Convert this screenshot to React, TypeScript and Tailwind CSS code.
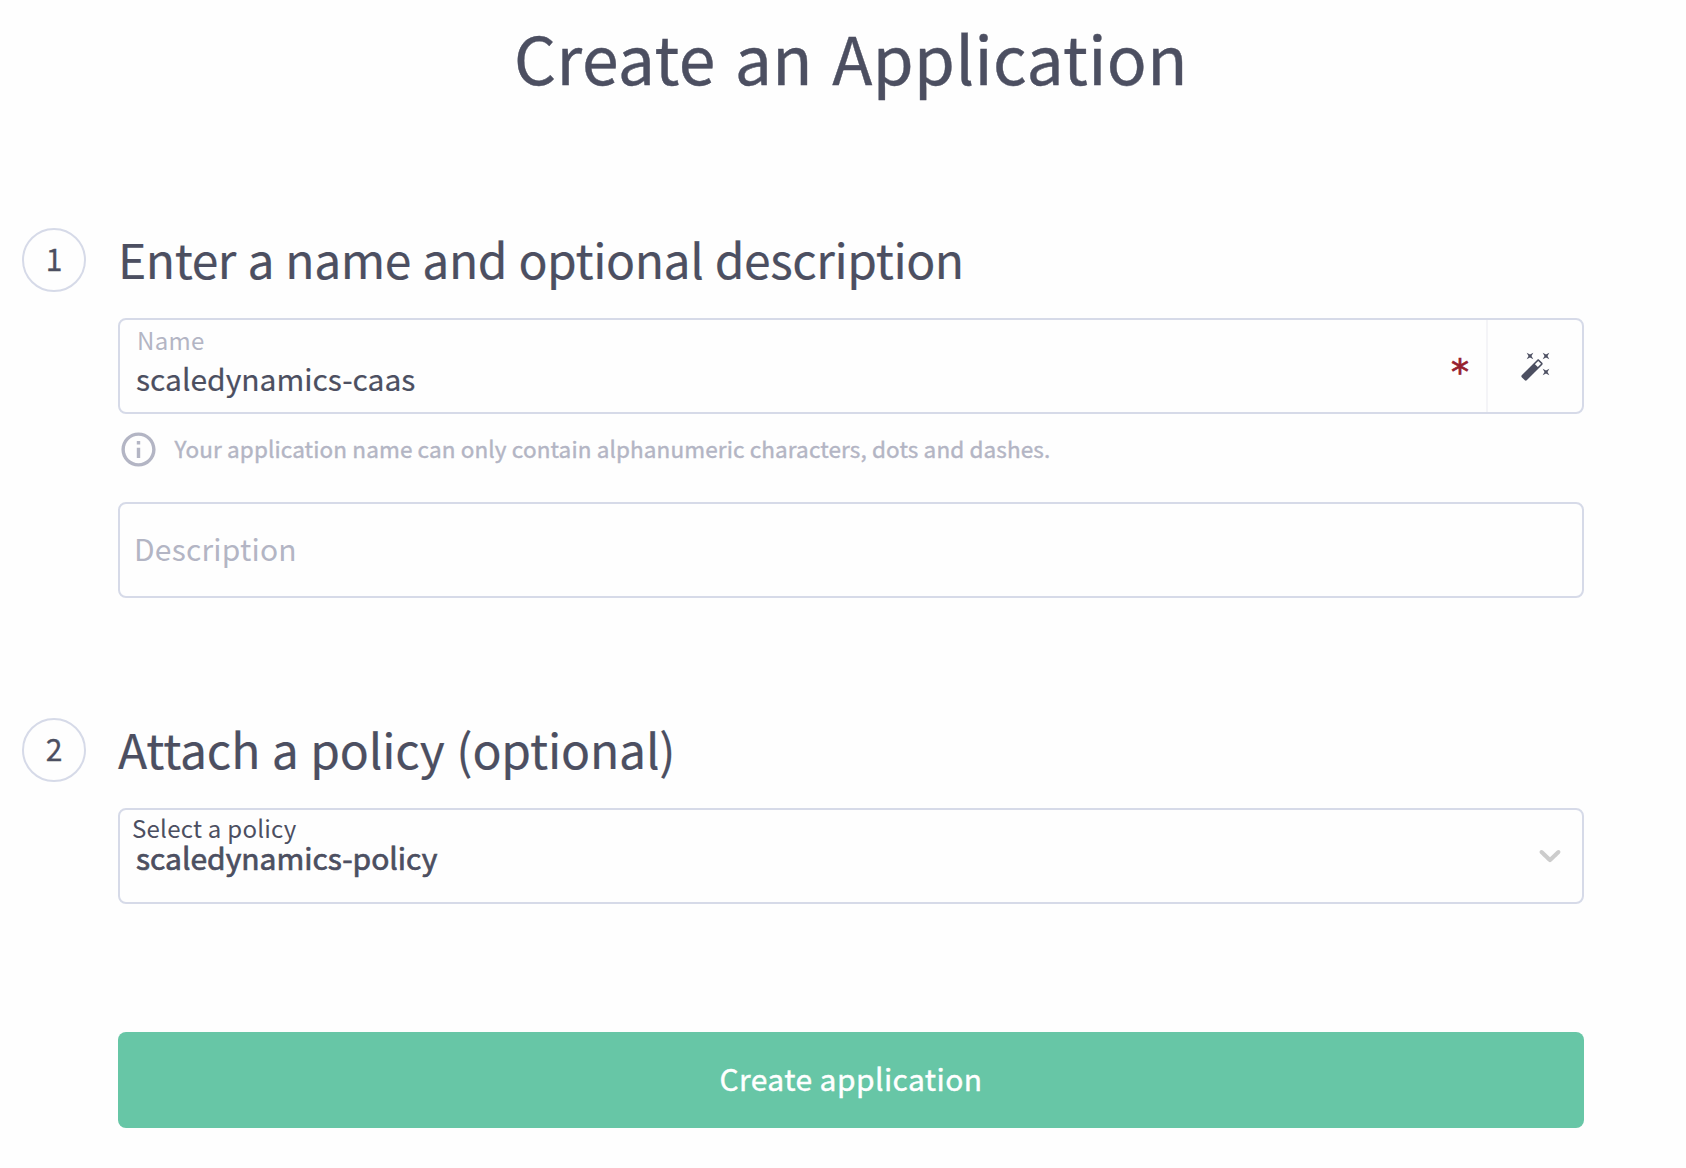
import React from "react";
import { MdInfoOutline } from "react-icons/md";

function Step({ number, title, titleClass }: { number: string; title: string; titleClass: string }) {
  return (
    <div className="flex h-16 items-center">
      <div className="flex size-16 shrink-0 items-center justify-center rounded-full border-2 border-[#d6dae8] pb-1 text-[30px] leading-10 [-webkit-text-stroke:0.3px]">
        {number}
      </div>
      <h2 className={`ml-8 pb-1 text-[48px] leading-[60px] whitespace-nowrap [-webkit-text-stroke:0.2px] ${titleClass}`}>{title}</h2>
    </div>
  );
}

function WandIcon() {
  return (
    <svg viewBox="0 0 24 24" className="ml-0.5 size-8" fill="currentColor">
      <path d="M7.5 5.6 5 7l1.4-2.5L5 2l2.5 1.4L10 2 8.6 4.5 10 7 7.5 5.6m12 9.8L22 14l-1.4 2.5L22 19l-2.5-1.4L17 19l1.4-2.5L17 14l2.5 1.4M22 2l-1.4 2.5L22 7l-2.5-1.4L17 7l1.4-2.5L17 2l2.5 1.4L22 2m-8.66 10.78 2.44-2.44-2.12-2.12-2.44 2.44 2.12 2.12m1.03-5.49 2.34 2.34c.39.37.39 1.02 0 1.41L5.04 22.71c-.39.39-1.04.39-1.41 0l-2.34-2.34c-.39-.37-.39-1.02 0-1.41L12.96 7.29c.39-.39 1.04-.39 1.41 0z" />
    </svg>
  );
}

export default function App() {
  return (
    <main className="h-[1168px] w-[1686px] overflow-hidden bg-[#fefefe] pr-[102px] pl-[22px] font-['Noto_Sans_CJK_SC',sans-serif] text-[#4c4f61]">
      <h1 className="ml-24 text-center text-[66px] leading-[112px] tracking-[0.4px] [word-spacing:4px] [-webkit-text-stroke:0.4px]">
        Create an Application
      </h1>

      <section className="mt-[116px]">
        <Step number="1" title="Enter a name and optional description" titleClass="tracking-[-0.42px] [word-spacing:1px]" />
        <div className="ml-24">
          <div className="mt-[26px] flex h-24 rounded-lg border-2 border-[#d6dae8]">
            <div className="flex-1 pt-1 pl-4">
              <div className="pl-px text-[24px] leading-[32px] tracking-[0.3px] text-[#b3b5c4]">Name</div>
              <div className="mt-1 text-[30px] leading-[36px] [-webkit-text-stroke:0.2px]">scaledynamics-caas</div>
            </div>
            <div className="flex w-[34px] justify-center pt-[26px] pl-0.5 font-['DejaVu_Sans',sans-serif] text-[36px] leading-[52px] text-[#96202e] [-webkit-text-stroke:0.7px]">
              *
            </div>
            <div className="ml-2.5 flex w-24 items-center justify-center border-l-2 border-[#f4f4f7]">
              <WandIcon />
            </div>
          </div>
          <div className="mt-[15px] flex h-10 items-center text-[#b3b5c4]">
            <MdInfoOutline className="-ml-[0.5px] size-[41px] shrink-0" />
            <span className="ml-4 pb-0.5 text-[22.5px] leading-8 tracking-[0.12px] whitespace-nowrap [-webkit-text-stroke:0.4px]">
              Your application name can only contain alphanumeric characters, dots and dashes.
            </span>
          </div>
          <div className="mt-[33px] flex h-24 items-center rounded-lg border-2 border-[#d6dae8] pb-1 pl-3.5 text-[30px] tracking-[0.2px] text-[#b3b5c4]">
            Description
          </div>
        </div>
      </section>

      <section className="mt-[120px]">
        <Step number="2" title="Attach a policy (optional)" titleClass="tracking-[-0.16px] [word-spacing:1px]" />
        <div className="mt-[26px] ml-24 flex h-24 items-center justify-between rounded-lg border-2 border-[#d6dae8] pr-3.5 pl-3">
          <div className="h-full pt-[3px]">
            <div className="text-[24px] leading-[30px] tracking-[0.25px]">Select a policy</div>
            <div className="-mt-px pl-1 text-[30px] leading-[30px] [-webkit-text-stroke:0.7px]">scaledynamics-policy</div>
          </div>
          <svg viewBox="0 0 20 20" className="mb-0.5 size-9 text-[#cccccc]" fill="currentColor">
            <path d="M4.516 7.548c0.436-0.446 1.043-0.481 1.576 0l3.908 3.747 3.908-3.747c0.533-0.481 1.141-0.446 1.574 0 0.436 0.445 0.408 1.197 0 1.615-0.406 0.418-4.695 4.502-4.695 4.502-0.217 0.223-0.502 0.335-0.787 0.335s-0.57-0.112-0.789-0.335c0 0-4.287-4.084-4.695-4.502s-0.436-1.17 0-1.615z" />
          </svg>
        </div>
      </section>

      <button className="mt-32 ml-24 flex h-24 w-[1466px] items-center justify-center rounded-lg bg-[#67c6a6] pb-1 text-[30px] tracking-[0.42px] text-white [-webkit-text-stroke:0.4px]">
        Create application
      </button>
    </main>
  );
}
